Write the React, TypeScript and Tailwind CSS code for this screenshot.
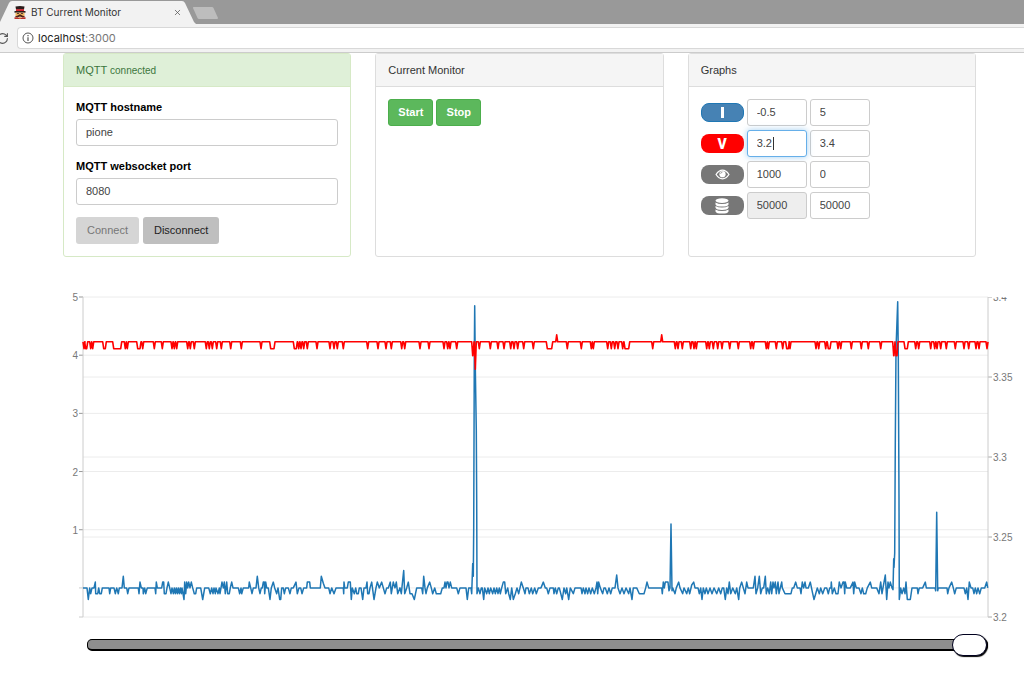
import React, { useState } from "react";
import { X, RotateCw } from "lucide-react";

/* ---------- measurement data ---------- */

// Current samples: "time value" pairs, value in tenths of an ampere.
const CURRENT_SAMPLES = `
69 0,81 0,85 -2,89 0,92 -1,96 0,102 0,106 1,107 -1,113 -1,116 0,119 -1,124 -1,127 0,147 0,149 -1,152 0,162 0,166 -1,170 0,175 -1,178 0,186 0,190 2,193 0,200 0,203 -1,207 0,235 0,237 -1,240 1,244 0,249 0,250 -1,254 0,257 -1,262 0,285 0,287 -1,289 1,292 0,305 0,308 1,311 1,313 -1,318 -1,321 0,325 1,329 0,333 -1,336 0,340 -1,343 0,346 -1,349 0,352 -1,355 0,358 -1,361 0,364 -1,366 0,369 -1,372 -2,374 1,377 -1,380 1,383 0,386 1,390 0,394 1,398 0,403 -1,407 -1,410 0,422 0,428 -2,434 0,446 0,451 -1,455 0,459 -1,462 0,466 -1,468 0,474 -1,478 0,480 -1,483 0,486 1,490 0,493 1,496 -1,500 1,503 -1,508 -1,511 0,515 1,519 0,535 0,539 -1,543 0,545 -1,550 0,566 0,568 1,572 0,576 -1,580 0,588 0,592 2,596 0,600 -1,604 0,607 0,610 1,613 1,614 -1,617 1,620 0,625 0,630 -2,634 0,640 1,644 0,650 -1,654 0,659 -2,662 -2,665 0,670 0,673 -1,677 0,685 0,690 -1,694 0,700 0,708 1,712 -1,717 0,722 0,726 -1,731 0,740 0,742 1,749 1,751 0,781 0,784 2,790 0.8,795 0,806 0,810 -1,815 0,822 -1,828 0,850 0,851 -1,852 1,854 0,862 0,865 1,871 1,874 -2,877 0,883 -1,887 0,890 -1,895 -1,898 0,903 0,908 -2,912 0,918 0,921 1,923 -1,927 -1,930 0,
935 1,942 -2,948 0,952 1,958 0,965 1,970 0,975 -1,980 0,985 0,991 1,994 -1,1000 1,1005 0,1009 1,1013 -1,1020 0,1024 -1,1031 3,1034 -1,1040 0,1045 1,1050 -1,1056 -1,1063 -2,1070 0,1085 0,1088 -1,1091 2,1095 0,1098 -1,1102 0,1109 1,1114 0,1118 -1,1124 0,1129 -1,1142 -1,1147 0,1152 0,1155 1,1158 0,1161 1,1164 1,1167 0,1171 1,1175 0,1190 0,1195 -1,1200 0,1218 0,1222 -2,1226 0,1233 0,1235 -1,1238 4.2,1240 2,1241 10,1242 25,1243 40,1244 48.5,1246 38,1249 27,1250 15,1251 -1,1255 0,1260 -1,1264 0,1267 0,1271 -2,1274 0,1280 -1,1284 0,1288 -1,1292 0,1298 -1,1302 0,1306 -1,1310 0,1314 -1,1318 0,1321 -1,1325 0,1330 1,1334 1,1337 -1,1343 0,1346 -1,1351 -2,1355 0,1360 -2,1366 -1,1371 0,1376 -1,1384 1,1390 0,1395 -1,1398 0,1404 0,1408 -1,1414 0,1418 -1,1424 0,1429 -1,1435 0,1443 0,1450 1,1456 0,1460 0,1465 -1,1470 0,1480 0,1482 -1,1486 0,1490 -1,1495 0,1498 0,1507 -2,1512 0,1517 -1,1520 0,1526 -2,1531 0,1540 -1,1545 0,1563 0,1566 -1,1570 0,1575 -1,1578 0,1583 -1,1587 0,1592 -1,1597 0,1603 -1,1608 0,1611 1,1613 -1,1616 1,1621 0,1628 -1,1632 0,1636 0,1642 -1,1647 0,1652 -1,1657 0,1665 0,1670 2.2,1674 0,1680 -1,1686 0,1692 -1,1698 0,1706 -1,1710 0,1716 -2,1720 0,1730 0,1738 -1,1752 -1,1757 0,1761 1,1766 0,1805 0,1807 -1,1810 1,1813 0,1816 1,1824 1,1827 -0.5,1830 0,1833 11,1836 -0.5,1838 0,1845 -1,1849 0,1856 1,1860 0,1868 -1,1872 0,1880 -1,1885 0,1889 -1,
1895 0.5,1901 1,1905 0,1914 0,1918 -1,1922 0,1926 -2,1930 0,1935 -1,1939 0,1944 -1,1950 0,1956 -1,1962 0,1970 -1,1976 0,1982 -1,1987 0,1991 0,1996 -2,2000 0,2004 -1,2008 1,2012 -1,2018 0,2026 -1,2030 0,2036 -2,2039 0,2045 1,2050 0,2055 -1,2060 1,2064 0,2080 0,2085 2,2088 -1,2093 0,2098 2,2102 -1,2107 0,2111 0,2116 2,2119 -1,2123 0,2128 -1,2132 1,2135 -1,2139 1,2142 0,2146 1,2149 -1,2154 1,2157 -1,2161 0,2165 1,2167 0,2175 -1,2193 -1,2197 0,2201 0,2207 1,2212 0,2220 0,2223 -1,2227 1,2231 0,2235 1,2238 0,2245 0,2251 1,2258 -1,2262 -2,2267 -1,2272 0,2278 -1,2282 0,2288 -1,2294 0,2300 0,2305 -1,2309 0,2313 0,2314 1,2317 -1,2323 0,2328 -1,2334 -1,2338 1,2343 0,2349 1,2352 1,2354 -1,2356 1,2360 0,2371 0,2379 1,2381 -1,2384 1,2389 0,2397 0,2403 -1,2407 0,2411 -1,2417 -1,2422 0,2431 1,2435 0,2450 0,2457 -1,2462 1,2466 -1,2469 0,2476 2.2,2480 -2,2484 1,2487 0,2491 1,2496 0,2499 -0.3,2501 5,2502 3.5,2504 6,2506 25,2508 41,2513 49.2,2515 40,2517 15,2518 -2,2522 0,2526 -1,2531 0,2535 -1,2538 1,2542 -2,2551 -2,2556 0,2572 0,2574 -1,2578 0,2588 0,2596 1,2599 0,2625 0,2627 -0.5,2630 13,2633 -0.5,2635 0,2661 0,2663 -1,2667 0,2675 1,2680 0,2684 -1,2689 0,2712 0,2716 -1,2720 0,2724 -2,2728 1,2733 0,2738 0,2742 -1,2746 0,2750 -1,2754 0,2759 -1,2764 0,2774 0,2780 1,2783 0`;

// Voltage steps away from the resting level: "from to steps".
const VOLTAGE_STEPS = `
72 72 -1,77 80 -1,92 92 -1,98 98 -1,131 136 -1,161 182 -1,196 196 -1,202 202 -1,233 240 -1,248 248 -1,283 283 -1,307 307 -1,336 336 -1,343 343 -1,350 350 -1,383 383 -1,391 391 -1,403 403 -1,439 439 -1,448 448 -1,457 457 -1,470 470 -1,484 484 -1,512 512 -1,544 544 -1,603 603 -1,632 642 -1,703 709 -1,716 716 -1,723 723 -1,731 731 -1,742 742 -1,771 771 -1,
810 810 -1,822 822 -1,832 832 -1,850 850 -1,923 923 -1,954 954 -1,978 978 -1,994 994 -1,1025 1025 -1,1034 1034 -1,1080 1080 -1,1107 1107 -1,1152 1152 -1,1163 1163 -1,1170 1170 -1,1190 1190 -1,1238 1239 -2,1246 1246 -4,1258 1258 -1,1291 1291 -1,1314 1314 -1,1332 1332 -1,1352 1352 -1,1362 1362 -1,1373 1373 -1,1391 1391 -1,1420 1420 -1,1462 1475 -1,1490 1490 1,1522 1522 -1,1564 1564 -1,1594 1594 -1,1600 1600 -1,1643 1643 -1,1654 1654 -1,1664 1664 -1,1674 1674 -1,1688 1688 -1,1695 1706 -1,1778 1778 -1,1805 1805 1,
1846 1846 -1,1854 1854 -1,1867 1867 -1,1892 1892 -1,1902 1902 -1,1909 1909 -1,1940 1940 -1,1948 1948 -1,1960 1960 -1,1973 1973 -1,1986 1986 -1,2009 2009 -1,2035 2035 -1,2072 2072 -1,2080 2080 -1,2119 2119 -1,2125 2125 -1,2149 2149 -1,2168 2168 -1,2180 2185 -1,2190 2190 -1,2268 2268 -1,2276 2276 -1,2297 2297 -1,2305 2310 -1,2334 2334 -1,2342 2342 -1,2374 2374 -1,2404 2404 -1,2425 2425 -1,2462 2462 -1,2501 2502 -2,2508 2511 -2,2535 2542 -1,2567 2567 -1,2576 2576 -1,2612 2612 -1,2624 2624 -1,2631 2631 -1,2642 2642 -1,2659 2659 -1,2686 2686 -1,2712 2712 -1,2726 2726 -1,2748 2748 -1,2757 2757 -1,2781 2781 -1`;

const parse = (s: string) => s.split(",").map((p) => p.trim().split(/\s+/).map(Number));

/* ---------- chart ---------- */

const LEFT = 83;
const RIGHT = 988;
const TOP = 297;
const BOTTOM = 617;

const timeX = (t: number) => t / 3 + 60;
const scaleY = (v: number, min: number, max: number) => BOTTOM - ((v - min) / (max - min)) * (BOTTOM - TOP);
const amps = (v: number) => scaleY(v, -0.5, 5);
const volts = (v: number) => scaleY(v, 3.2, 3.4);

const toPoints = (pts: number[][]) => pts.map(([x, y]) => `${x.toFixed(1)},${y.toFixed(1)}`).join(" ");

const currentPoints = toPoints(parse(CURRENT_SAMPLES).map(([t, v]) => [timeX(t), amps(v / 10)]));

const REST = 3.372;
const STEP = 0.0043;
const voltagePoints = toPoints([
  ...parse(VOLTAGE_STEPS).flatMap(([a, b, n]) => [
    [timeX(a - 3), volts(REST)],
    [timeX(a), volts(REST + n * STEP)],
    [timeX(b), volts(REST + n * STEP)],
    [timeX(b + 3), volts(REST)],
  ]),
  [RIGHT, volts(REST)],
]);

function Chart() {
  return (
    <svg
      viewBox="0 289 1024 336"
      className="mt-8 block h-auto w-full font-['Liberation_Sans',Arial,sans-serif] text-[10px]"
      role="img"
      aria-label="Current and voltage over time"
    >
      {[0, 1, 2, 3, 4, 5].map((v) => (
        <g key={v}>
          <line x1={LEFT} x2={RIGHT} y1={amps(v)} y2={amps(v)} stroke="#ececec" />
          <line x1={79} x2={LEFT} y1={amps(v)} y2={amps(v)} stroke={v ? "#999" : "#ccc"} />
          {v > 0 && (
            <text x={78} y={amps(v) + 4} textAnchor="end" fill="#777">
              {v}
            </text>
          )}
        </g>
      ))}
      {[3.2, 3.25, 3.3, 3.35].map((v) => (
        <g key={v}>
          <line x1={LEFT} x2={RIGHT} y1={volts(v)} y2={volts(v)} stroke="#ececec" />
          <line x1={RIGHT} x2={992} y1={volts(v)} y2={volts(v)} stroke="#aaa" />
          <text x={993} y={volts(v) + 4} fill="#777">
            {v}
          </text>
        </g>
      ))}
      <svg x={RIGHT} y={TOP} width={36} height={20}>
        <line x1={0} x2={4} y1={0} y2={0} stroke="#aaa" />
        <text x={5} y={4} fill="#777">
          3.4
        </text>
      </svg>
      <path d={`M79 ${BOTTOM}H83V${TOP}`} fill="none" stroke="#ccc" />
      <path d={`M${RIGHT} ${TOP}V${BOTTOM}`} stroke="#ccc" />
      <polyline points={currentPoints} fill="none" stroke="#1f77b4" strokeWidth="1.5" strokeLinejoin="round" />
      <polyline points={voltagePoints} fill="none" stroke="#ff0000" strokeWidth="1.6" strokeLinejoin="round" />
    </svg>
  );
}

/* ---------- icons ---------- */

function Favicon() {
  return (
    <svg viewBox="0 0 12 13" className="h-[13px] w-3 shrink-0" aria-hidden="true">
      <path d="M1.500.5Q6-.3 10.500.5L10 3.500H2Z" fill="#2a1c1c" />
      <path d="M2 3.200h8V5.200H2Z" fill="#d3202a" />
      <path d="M.5 5h11v1.700H.5Z" fill="#2a1c1c" />
      <path d="M1.500 6.700h9v3.600h-9Z" fill="#eeb25c" />
      <path d="M3 7.200h2v.9H3ZM7 7.200h2v.9H7Z" fill="#2a1c1c" />
      <path d="M.8 10.500Q3 10.200 6 8.300 9 10.200 11.200 10.500 9 11.800 6 10.600 3 11.800 .8 10.500Z" fill="#4a2418" />
      <path d="M.5 11.300h3l2.500 1 2.500-1h3V13H.5Z" fill="#b8322a" />
      <path d="M4.600 11h2.800L6 12.800Z" fill="#eeb25c" />
    </svg>
  );
}

function EyeIcon() {
  return (
    <svg viewBox="0 0 16 12" className="h-[11px] w-[15px]" aria-hidden="true">
      <path d="M1 6Q4 1.300 8 1.300T15 6Q12 10.700 8 10.700T1 6Z" fill="none" stroke="#fff" strokeWidth="1.400" />
      <circle cx="8" cy="5.600" r="3.400" fill="#fff" />
      <path d="M6 5.200A2 2 0 0 1 8 3.300" fill="none" stroke="#777" strokeWidth=".8" />
    </svg>
  );
}

function DatabaseIcon() {
  return (
    <svg viewBox="0 0 14 16" className="h-4 w-3.5" fill="#fff" aria-hidden="true">
      <ellipse cx="7" cy="2.600" rx="6.500" ry="2.400" />
      <path d="M.5 4.400Q3 6 7 6T13.500 4.400V6.400Q12.500 8.600 7 8.600T.5 6.400Z" />
      <path d="M.5 8Q3 9.600 7 9.600T13.500 8V9.800Q12.500 12 7 12T.5 9.800Z" />
      <path d="M.5 11.400Q3 13 7 13T13.500 11.400V13.400Q12.500 15.600 7 15.600T.5 13.400Z" />
    </svg>
  );
}

/* ---------- browser frame ---------- */

function BrowserBar() {
  return (
    <header className="font-[Inter,Roboto,sans-serif]">
      <div className="flex h-6 overflow-hidden bg-[#999]">
        <div className="relative h-6 w-[196px] shrink-0">
          <svg viewBox="0 0 196 24" className="absolute inset-0 h-full w-full" aria-hidden="true">
            <path d="M0 24V22L9 3Q10 1 12 1H182Q184 1 185 3L194 22 196 24Z" fill="#f2f2f2" />
          </svg>
          <div className="relative flex h-6 items-center pr-3.5 pl-3.5">
            <Favicon />
            <span className="ml-[5px] flex-1 text-[10px] text-[#333]">BT Current Monitor</span>
            <button type="button" aria-label="Close tab" className="text-[#555]">
              <X size={9} />
            </button>
          </div>
        </div>
        <svg viewBox="0 0 28 24" className="-ml-1 h-6 w-7 shrink-0" aria-hidden="true">
          <path d="M1.500 7H20Q21 7 21.500 8L26 18Q26 19 25 19H7Q6 19 5.500 18L1 8Q1 7 1.500 7Z" fill="#bdbdbd" />
        </svg>
      </div>
      <div className="flex h-[29px] items-center overflow-hidden border-b border-[#ccc] bg-[#f2f2f2]">
        <button type="button" aria-label="Reload" className="-ml-1 w-[21px] shrink-0 text-[#555]">
          <RotateCw size={13} />
        </button>
        <div className="flex h-[22px] flex-1 items-center gap-1 rounded-l border border-r-0 border-[#d8d8d8] bg-white pl-1">
          <svg viewBox="0 0 12 12" className="h-3 w-3" fill="none" stroke="#555" aria-hidden="true">
            <circle cx="6" cy="6" r="5" />
            <path d="M6 5.300V9M6 3V4.200" strokeWidth="1.200" />
          </svg>
          <span className="text-[11px] text-[#222]">
            localhost<span className="text-[#777]">:3000</span>
          </span>
        </div>
      </div>
    </header>
  );
}

/* ---------- panels ---------- */

const field = "h-[27px] rounded-[3px] border px-[9px] pb-0.5 text-[11px] text-[#444] outline-none";

function Panel({ title, success = false, children }: { title: React.ReactNode; success?: boolean; children: React.ReactNode }) {
  return (
    <section className={`rounded-[3px] border bg-white ${success ? "border-[#d6e9c6]" : "border-[#ddd]"}`}>
      <h2
        className={`flex h-[33px] items-center border-b px-3 text-[11px] ${
          success ? "border-[#d6e9c6] bg-[#dff0d8] text-[#3c763d]" : "border-[#ddd] bg-[#f5f5f5] text-[#333]"
        }`}
      >
        {title}
      </h2>
      <div className="p-3">{children}</div>
    </section>
  );
}

function TextField({ id, label, value }: { id: string; label: string; value: string }) {
  return (
    <div className="mb-3">
      <label htmlFor={id} className="mb-1 block text-[11px] leading-4 font-bold text-black">
        {label}
      </label>
      <input id={id} defaultValue={value} className={`${field} w-full border-[#ccc] bg-white`} />
    </div>
  );
}

function RangeRow({
  id,
  name,
  badge,
  tone,
  first,
  second,
  active = false,
  locked = false,
}: {
  id: string;
  name: string;
  badge: React.ReactNode;
  tone: string;
  first: string;
  second: string;
  active?: boolean;
  locked?: boolean;
}) {
  const firstTone = active
    ? "border-[#66afe9] bg-white shadow-[0_0_6px_rgba(102,175,233,0.6)]"
    : locked
      ? "border-[#ccc] bg-[#eee]"
      : "border-[#ccc] bg-white";
  return (
    <div className="flex items-center gap-[3px]">
      <label
        htmlFor={id}
        aria-label={name}
        className={`flex h-[19px] w-[43px] items-center justify-center rounded-lg font-[Roboto,sans-serif] text-sm font-black text-white ${tone}`}
      >
        {badge}
      </label>
      <div className="relative flex">
        <input id={id} defaultValue={first} readOnly={locked} className={`${field} w-[60px] ${firstTone}`} />
        {active && <span className="absolute top-[7px] left-[26px] h-[13px] w-px bg-[#333]" />}
      </div>
      <input aria-label={`${name}, second value`} defaultValue={second} className={`${field} w-[60px] border-[#ccc] bg-white`} />
    </div>
  );
}

export default function App() {
  const [position, setPosition] = useState(100);
  return (
    <div className="min-h-screen overflow-hidden bg-white font-['Liberation_Sans',Arial,sans-serif] text-[11px] text-[#333]">
      <BrowserBar />
      <main>
        <div className="grid grid-cols-3 gap-6 pr-12 pl-[63px]">
          <Panel
            success
            title={
              <span>
                MQTT <small className="text-[10px]">connected</small>
              </span>
            }
          >
            <TextField id="host" label="MQTT hostname" value="pione" />
            <TextField id="port" label="MQTT websocket port" value="8080" />
            <div className="flex gap-1">
              <button type="button" disabled className="h-[27px] rounded-[3px] bg-[#d5d5d5] px-[11px] text-[#777]">
                Connect
              </button>
              <button type="button" className="h-[27px] rounded-[3px] bg-[#bfbfbf] px-[11px] text-[#222]">
                Disconnect
              </button>
            </div>
          </Panel>

          <Panel title="Current Monitor">
            <div className="flex gap-[3px]">
              {["Start", "Stop"].map((name) => (
                <button
                  key={name}
                  type="button"
                  className="h-[27px] min-w-[45px] rounded-[3px] border border-[#4cae4c] bg-[#5cb85c] px-2 font-bold text-white"
                >
                  {name}
                </button>
              ))}
            </div>
          </Panel>

          <Panel title="Graphs">
            <div className="flex flex-col gap-1">
              <RangeRow
                id="current-min"
                name="Current range"
                tone="bg-[#4682b4] border border-[#1f77b4]"
                badge={<span className="h-[11px] w-[3px] bg-white" />}
                first="-0.5"
                second="5"
              />
              <RangeRow id="voltage-min" name="Voltage range" tone="bg-[#ff0000]" badge="V" first="3.2" second="3.4" active />
              <RangeRow id="view-size" name="Visible samples" tone="bg-[#777]" badge={<EyeIcon />} first="1000" second="0" />
              <RangeRow id="stored" name="Stored samples" tone="bg-[#777]" badge={<DatabaseIcon />} first="50000" second="50000" locked />
            </div>
          </Panel>
        </div>

        <Chart />

        <div className="mt-2 pr-9 pl-[87px]">
          <input
            type="range"
            aria-label="Position in recording"
            value={position}
            onChange={(e) => setPosition(Number(e.target.value))}
            className="block h-6 w-full appearance-none bg-transparent [&::-webkit-slider-runnable-track]:h-3 [&::-webkit-slider-runnable-track]:rounded-[5px] [&::-webkit-slider-runnable-track]:border [&::-webkit-slider-runnable-track]:border-b-2 [&::-webkit-slider-runnable-track]:border-black [&::-webkit-slider-runnable-track]:bg-[#8e8e8e] [&::-webkit-slider-thumb]:-mt-1.5 [&::-webkit-slider-thumb]:h-[22px] [&::-webkit-slider-thumb]:w-[35px] [&::-webkit-slider-thumb]:appearance-none [&::-webkit-slider-thumb]:rounded-[11px] [&::-webkit-slider-thumb]:border [&::-webkit-slider-thumb]:border-[#00001e] [&::-webkit-slider-thumb]:bg-white [&::-webkit-slider-thumb]:shadow-[1px_1px_1px_#000]"
          />
        </div>
      </main>
    </div>
  );
}
